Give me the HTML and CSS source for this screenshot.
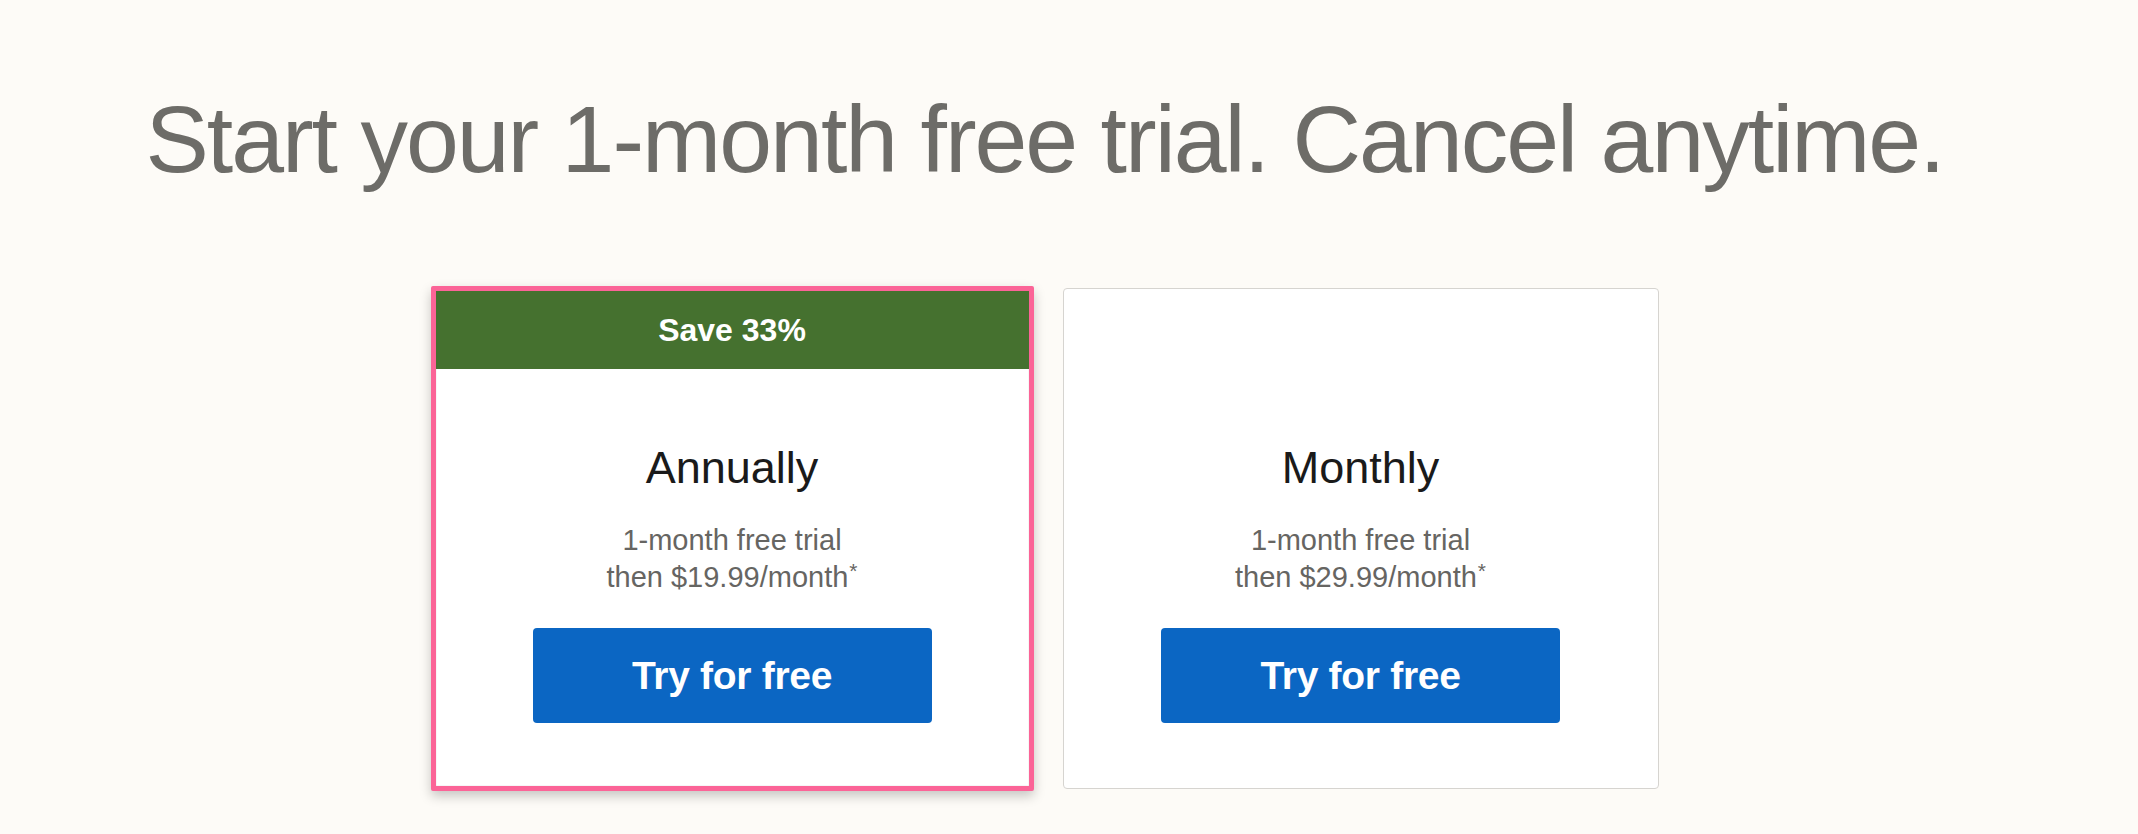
FILE: index.html
```html
<!DOCTYPE html>
<html lang="en">
<head>
<meta charset="utf-8">
<title>Start your free trial</title>
<link rel="stylesheet" href="styles.css">
</head>
<body>
<main class="page">
  <h1 class="headline">Start your 1-month free trial. Cancel anytime.</h1>
  <section class="plans">
    <article class="plan plan--selected">
      <div class="plan__badge">Save 33%</div>
      <div class="plan__body">
        <h2 class="plan__name">Annually</h2>
        <p class="plan__price">1-month free trial<br>then $19.99/month<span class="plan__note">*</span></p>
        <button class="plan__cta" type="button">Try for free</button>
      </div>
    </article>
    <article class="plan">
      <div class="plan__badge plan__badge--empty"></div>
      <div class="plan__body">
        <h2 class="plan__name">Monthly</h2>
        <p class="plan__price">1-month free trial<br>then $29.99/month<span class="plan__note">*</span></p>
        <button class="plan__cta" type="button">Try for free</button>
      </div>
    </article>
  </section>
</main>
</body>
</html>
```
FILE: styles.css
```css
* { box-sizing: border-box; }

html, body {
  margin: 0;
  padding: 0;
  background: #fdfbf7;
  font-family: "Liberation Sans", Arial, sans-serif;
}

.page {
  display: flex;
  flex-direction: column;
  align-items: center;
  padding: 82px 49px 0 0;
  min-height: 834px;
}

.headline {
  margin: 0;
  font-size: 95px;
  line-height: 114px;
  font-weight: 400;
  letter-spacing: -2px;
  color: #6d6c68;
  white-space: nowrap;
}

.plans {
  display: flex;
  align-items: center;
  gap: 29px;
  margin-top: 90px;
}

.plan {
  width: 596px;
  height: 501px;
  background: #fff;
  border: 1px solid #d6d4d0;
  border-radius: 4px;
  display: flex;
  flex-direction: column;
  overflow: hidden;
}

.plan--selected {
  width: 603px;
  height: 505px;
  border: 5px solid #fb6497;
  border-radius: 2px;
  box-shadow: 0 5px 12px rgba(0, 0, 0, 0.22), inset 0 0 1px rgba(0, 0, 0, 0.35);
}

.plan__badge {
  height: 78px;
  flex: none;
  background: #45712f;
  color: #fff;
  font-weight: 700;
  font-size: 32px;
  display: flex;
  align-items: center;
  justify-content: center;
}

.plan__badge--empty {
  height: 80px;
  background: transparent;
}

.plan__body {
  display: flex;
  flex-direction: column;
  align-items: center;
  padding-top: 72px;
}

.plan__name {
  margin: 0;
  font-size: 45px;
  line-height: 54px;
  font-weight: 400;
  color: #1a1a1a;
}

.plan__price {
  margin: 27px 0 0;
  font-size: 29px;
  line-height: 37px;
  color: #666562;
  text-align: center;
}

.plan__note {
  font-size: 21px;
  vertical-align: 9px;
  line-height: 0;
  margin-left: 1px;
}

.plan__cta {
  margin-top: 32px;
  width: 399px;
  height: 95px;
  border: 0;
  border-radius: 4px;
  background: #0b66c3;
  color: #fff;
  font-family: "Liberation Sans", Arial, sans-serif;
  font-weight: 700;
  font-size: 39px;
  letter-spacing: -0.3px;
  cursor: pointer;
}
```
